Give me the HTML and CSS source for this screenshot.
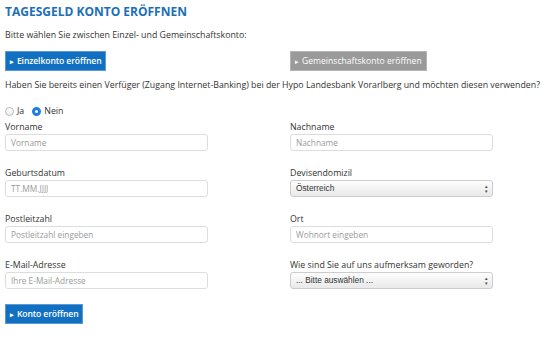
FILE: index.html
```html
<!DOCTYPE html>
<html lang="de">
<head>
    <meta charset="UTF-8">
    <title>Tagesgeld Konto eröffnen</title>
    <link rel="stylesheet" href="styles.css">
</head>
<body>
    <div class="container">
        <h1 class="title">TAGESGELD KONTO ERÖFFNEN</h1>
        <p class="intro">Bitte wählen Sie zwischen Einzel- und Gemeinschaftskonto:</p>

        <div class="choice-row">
            <button class="btn btn-primary" type="button">Einzelkonto eröffnen</button>
            <button class="btn btn-grey" type="button">Gemeinschaftskonto eröffnen</button>
        </div>

        <p class="question">Haben Sie bereits einen Verfüger (Zugang Internet-Banking) bei der Hypo Landesbank Vorarlberg und möchten diesen verwenden?</p>

        <div class="radio-row">
            <label class="radio"><span class="dot"></span>Ja</label>
            <label class="radio"><span class="dot checked"></span>Nein</label>
        </div>

        <form class="form-grid">
            <div class="form-group">
                <label>Vorname</label>
                <input type="text" placeholder="Vorname">
            </div>
            <div class="form-group">
                <label>Nachname</label>
                <input type="text" placeholder="Nachname">
            </div>
            <div class="form-group">
                <label>Geburtsdatum</label>
                <input type="text" placeholder="TT.MM.JJJJ">
            </div>
            <div class="form-group">
                <label>Devisendomizil</label>
                <div class="select">
                    <span class="select-value">Österreich</span>
                    <span class="select-arrows">▴<br>▾</span>
                </div>
            </div>
            <div class="form-group">
                <label>Postleitzahl</label>
                <input type="text" placeholder="Postleitzahl eingeben">
            </div>
            <div class="form-group">
                <label>Ort</label>
                <input type="text" placeholder="Wohnort eingeben">
            </div>
            <div class="form-group">
                <label>E-Mail-Adresse</label>
                <input type="text" placeholder="Ihre E-Mail-Adresse">
            </div>
            <div class="form-group">
                <label>Wie sind Sie auf uns aufmerksam geworden?</label>
                <div class="select">
                    <span class="select-value">... Bitte auswählen ...</span>
                    <span class="select-arrows">▴<br>▾</span>
                </div>
            </div>
        </form>

        <button class="btn btn-primary submit" type="button">Konto eröffnen</button>
    </div>
</body>
</html>
```

FILE: styles.css
```css
body {
    margin: 0;
    padding: 0 5px;
    font-family: "Open Sans", sans-serif;
    font-size: 8.8px;
    color: #333;
    background: #fff;
}

.container {
    width: 540px;
}

.title {
    margin: 0;
    padding-top: 3px;
    font-size: 12px;
    font-weight: bold;
    color: #1b6fb8;
    line-height: 18px;
}

.intro {
    margin: 8px 0 0;
    line-height: 12px;
}

.choice-row {
    display: grid;
    grid-template-columns: 285px 1fr;
    margin-top: 10px;
}

.choice-row .btn {
    justify-self: start;
}

.btn {
    height: 20px;
    padding: 0 3px 0 4px;
    border: 1px solid;
    border-radius: 0;
    font-family: "Open Sans", sans-serif;
    font-size: 8.6px;
    font-weight: 600;
    letter-spacing: -0.1px;
    color: #fff;
    cursor: pointer;
}

.btn::before {
    content: "▸";
    font-size: 7px;
    margin-right: 3px;
}

.btn-primary {
    background: #1270c2;
    border-color: #5a9ad6;
}

.btn-grey {
    background: #9a9a9a;
    border-color: #b5b5b5;
    font-weight: normal;
    letter-spacing: 0;
    padding-right: 4px;
}

.question {
    margin: 8px 0 0;
    line-height: 12px;
}

.radio-row {
    display: flex;
    gap: 8px;
    margin-top: 14px;
    line-height: 12px;
}

.radio {
    display: flex;
    align-items: center;
}

.dot {
    width: 7px;
    height: 7px;
    border: 1px solid #b8b8b8;
    border-radius: 50%;
    margin-right: 3px;
    background: linear-gradient(#fff, #eee);
}

.dot.checked {
    border: 3px solid #1a7ee6;
    width: 3px;
    height: 3px;
    background: #fff;
}

.form-grid {
    display: grid;
    grid-template-columns: 285px 1fr;
    row-gap: 16px;
    margin-top: 4px;
}

.form-group label {
    display: block;
    line-height: 12px;
    margin-bottom: 1px;
}

.form-group input {
    box-sizing: border-box;
    width: 203px;
    height: 17px;
    padding: 0 5px;
    border: 1px solid #ddd;
    border-radius: 3px;
    font-family: "Open Sans", sans-serif;
    font-size: 8.3px;
}

.form-group input::placeholder {
    color: #9a9a9a;
}

.select {
    position: relative;
    box-sizing: border-box;
    width: 203px;
    height: 17px;
    padding: 0 5px;
    border: 1px solid #ccc;
    border-radius: 3px;
    background: linear-gradient(#fdfdfd, #e9e9e9);
    font-family: "Liberation Sans", Arial, sans-serif;
    font-size: 8.3px;
    line-height: 15px;
    color: #333;
}

.select-arrows {
    position: absolute;
    right: 4px;
    top: 3px;
    font-size: 5px;
    line-height: 5px;
    color: #444;
}

.submit {
    margin-top: 15px;
}
```
